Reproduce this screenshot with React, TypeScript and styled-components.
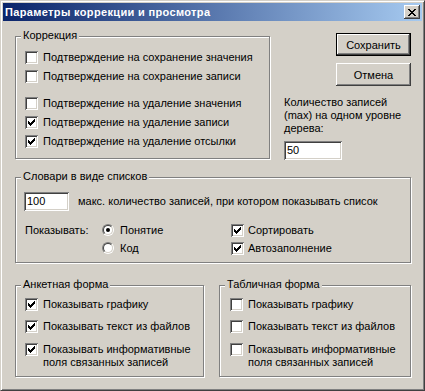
import * as React from 'react';
import styled, { createGlobalStyle } from 'styled-components';

const GlobalStyle = createGlobalStyle`
    html, body {
        margin: 0;
        padding: 0;
        background: #d4d0c8;
    }
    body {
        font-family: "Liberation Sans", Arial, sans-serif;
        font-size: 11px;
        color: #000;
    }
`;

const Window = styled.div`
    box-sizing: border-box;
    width: 425px;
    height: 391px;
    padding: 2px;
    background: #d4d0c8;
    border: 1px solid;
    border-color: #d4d0c8 #404040 #404040 #d4d0c8;
    box-shadow: inset 1px 1px 0 #fff, inset -1px -1px 0 #808080;
    display: flex;
    flex-direction: column;
`;

const TitleBar = styled.div`
    height: 18px;
    flex: none;
    display: flex;
    align-items: center;
    padding: 0 2px;
    background: linear-gradient(to right, #0a246a, #a6caf0);
    color: #fff;
    font-weight: bold;
`;

const TitleText = styled.div`
    flex: 1;
    line-height: 14px;
    letter-spacing: 0.35px;
    white-space: nowrap;
`;

const CloseButton = styled.div`
    box-sizing: border-box;
    width: 16px;
    height: 14px;
    display: flex;
    align-items: center;
    justify-content: center;
    background: #d4d0c8;
    box-shadow: inset -1px -1px 0 #404040, inset 1px 1px 0 #fff, inset -2px -2px 0 #808080;
`;

const Client = styled.div`
    flex: 1;
    display: flex;
    flex-direction: column;
    padding-left: 12px;
`;

const TopRow = styled.div`
    display: flex;
    align-items: flex-start;
`;

const Frame = styled.div<{ $w: number; $h: number; $mt?: number }>`
    position: relative;
    box-sizing: border-box;
    width: ${(p) => p.$w}px;
    height: ${(p) => p.$h}px;
    margin-top: ${(p) => p.$mt || 0}px;
    border: 1px solid #808080;
    box-shadow: inset 1px 1px 0 #fff, 1px 1px 0 #fff;
`;

const Legend = styled.span`
    position: absolute;
    top: -8px;
    left: 5px;
    padding: 0 2px;
    line-height: 13px;
    background: #d4d0c8;
    white-space: nowrap;
`;

const FrameBody = styled.div<{ $pt: number; $pl: number; $gap?: number }>`
    display: flex;
    flex-direction: column;
    gap: ${(p) => p.$gap || 0}px;
    padding: ${(p) => p.$pt}px 0 0 ${(p) => p.$pl}px;
`;

const CheckRow = styled.div<{ $mt?: number }>`
    display: flex;
    align-items: flex-start;
    gap: 5px;
    margin-top: ${(p) => p.$mt || 0}px;
`;

const Label = styled.span`
    line-height: 13px;
    white-space: nowrap;
`;

const Sunken = styled.div`
    box-sizing: border-box;
    background: #fff;
    box-shadow: inset 1px 1px 0 #808080, inset -1px -1px 0 #fff, inset 2px 2px 0 #404040, inset -2px -2px 0 #d4d0c8;
`;

const CheckBoxBox = styled(Sunken)`
    flex: none;
    width: 13px;
    height: 13px;
    display: flex;
    padding: 3px;
`;

const RightColumn = styled.div`
    width: 127px;
    margin-left: 14px;
    display: flex;
    flex-direction: column;
    padding-top: 12px;
`;

const Button = styled.div<{ $default?: boolean; $mt?: number }>`
    box-sizing: border-box;
    align-self: flex-end;
    width: 75px;
    height: 23px;
    margin-top: ${(p) => p.$mt || 0}px;
    display: flex;
    align-items: center;
    justify-content: center;
    border: ${(p) => (p.$default ? '1px solid #000' : 'none')};
    box-shadow: inset -1px -1px 0 #404040, inset 1px 1px 0 #fff, inset -2px -2px 0 #808080;
`;

const InfoLabel = styled.div`
    margin-top: 10px;
    line-height: 13px;
    white-space: nowrap;
`;

const TextBox = styled(Sunken)<{ $w: number }>`
    width: ${(p) => p.$w}px;
    height: 19px;
    padding: 0 3px;
    line-height: 19px;
    flex: none;
`;

const CountBox = styled(TextBox)`
    margin-top: 6px;
`;

const LimitRow = styled.div`
    display: flex;
    align-items: center;
    gap: 9px;
`;

const ShowGrid = styled.div`
    display: grid;
    grid-template-columns: 78px 129px auto;
    grid-auto-rows: 18px;
    align-items: center;
    margin-top: 10px;
`;

const ShowLabel = styled.span`
    padding-left: 1px;
`;

const OptionRow = styled.div<{ $col: number }>`
    grid-column: ${(p) => p.$col};
    display: flex;
    align-items: center;
    gap: ${(p) => (p.$col === 2 ? 6 : 4)}px;
    line-height: 13px;
    white-space: nowrap;
`;

const RadioOuter = styled.span`
    box-sizing: border-box;
    flex: none;
    width: 12px;
    height: 12px;
    display: flex;
    border-radius: 50%;
    border: 1px solid;
    border-color: #808080 #fff #fff #808080;
`;

const RadioInner = styled.span`
    box-sizing: border-box;
    flex: 1;
    display: flex;
    align-items: center;
    justify-content: center;
    border-radius: 50%;
    border: 1px solid;
    border-color: #404040 #d4d0c8 #d4d0c8 #404040;
    background: #fff;
`;

const RadioDot = styled.span`
    width: 4px;
    height: 4px;
    border-radius: 50%;
    background: #000;
`;

const BottomRow = styled.div`
    display: flex;
    gap: 15px;
    margin-top: 22px;
`;

const CheckMark = () => (
    <svg width="7" height="7" viewBox="0 0 7 7" shapeRendering="crispEdges">
        <path
            fill="#000"
            d="M6 0h1v1h-1z M5 1h2v1h-2z M0 2h1v1h-1z M4 2h3v1h-3z M0 3h2v1h-2z M3 3h3v1h-3z M0 4h5v1h-5z M1 5h3v1h-3z M2 6h1v1h-1z"
        />
    </svg>
);

const CloseGlyph = () => (
    <svg width="8" height="7" viewBox="0 0 8 7" shapeRendering="crispEdges">
        <path
            fill="#000"
            d="M0 0h2v1h-2z M6 0h2v1h-2z M1 1h2v1h-2z M5 1h2v1h-2z M2 2h4v1h-4z M3 3h2v1h-2z M2 4h4v1h-4z M1 5h2v1h-2z M5 5h2v1h-2z M0 6h2v1h-2z M6 6h2v1h-2z"
        />
    </svg>
);

const CheckBox = ({ checked }: { checked?: boolean }) => (
    <CheckBoxBox>{checked && <CheckMark />}</CheckBoxBox>
);

const Radio = ({ checked }: { checked?: boolean }) => (
    <RadioOuter>
        <RadioInner>{checked && <RadioDot />}</RadioInner>
    </RadioOuter>
);

interface CheckItemProps {
    checked?: boolean;
    mt?: number;
    children: React.ReactNode;
}

const CheckItem = ({ checked, mt, children }: CheckItemProps) => (
    <CheckRow $mt={mt}>
        <CheckBox checked={checked} />
        <Label>{children}</Label>
    </CheckRow>
);

const correction = [
    { text: 'Подтверждение на сохранение значения', checked: false },
    { text: 'Подтверждение на сохранение записи', checked: false },
    { text: 'Подтверждение на удаление значения', checked: false, mt: 8 },
    { text: 'Подтверждение на удаление записи', checked: true },
    { text: 'Подтверждение на удаление отсылки', checked: true },
];

const FormGroup = ({ title, width, pl, checked }: { title: string; width: number; pl: number; checked: boolean }) => (
    <Frame $w={width} $h={92}>
        <Legend>{title}</Legend>
        <FrameBody $pt={12} $pl={pl} $gap={9}>
            <CheckItem checked={checked}>Показывать графику</CheckItem>
            <CheckItem checked={checked}>Показывать текст из файлов</CheckItem>
            <CheckItem checked={checked} mt={1}>
                Показывать информативные
                <br />
                поля связанных записей
            </CheckItem>
        </FrameBody>
    </Frame>
);

export default function App() {
    return (
        <>
            <GlobalStyle />
            <Window>
                <TitleBar>
                    <TitleText>Параметры коррекции и просмотра</TitleText>
                    <CloseButton>
                        <CloseGlyph />
                    </CloseButton>
                </TitleBar>
                <Client>
                    <TopRow>
                        <Frame $w={255} $h={123} $mt={15}>
                            <Legend>Коррекция</Legend>
                            <FrameBody $pt={14} $pl={9} $gap={6}>
                                {correction.map((item) => (
                                    <CheckItem key={item.text} checked={item.checked} mt={item.mt}>
                                        {item.text}
                                    </CheckItem>
                                ))}
                            </FrameBody>
                        </Frame>
                        <RightColumn>
                            <Button $default>Сохранить</Button>
                            <Button $mt={7}>Отмена</Button>
                            <InfoLabel>
                                Количество записей
                                <br />
                                (max) на одном уровне
                                <br />
                                дерева:
                            </InfoLabel>
                            <CountBox $w={58}>50</CountBox>
                        </RightColumn>
                    </TopRow>

                    <Frame $w={396} $h={86} $mt={17}>
                        <Legend>Словари в виде списков</Legend>
                        <FrameBody $pt={14} $pl={8}>
                            <LimitRow>
                                <TextBox $w={45}>100</TextBox>
                                <Label>макс. количество записей, при котором показывать список</Label>
                            </LimitRow>
                            <ShowGrid>
                                <ShowLabel>Показывать:</ShowLabel>
                                <OptionRow $col={2}>
                                    <Radio checked />
                                    Понятие
                                </OptionRow>
                                <OptionRow $col={3}>
                                    <CheckBox checked />
                                    Сортировать
                                </OptionRow>
                                <OptionRow $col={2}>
                                    <Radio />
                                    Код
                                </OptionRow>
                                <OptionRow $col={3}>
                                    <CheckBox checked />
                                    Автозаполнение
                                </OptionRow>
                            </ShowGrid>
                        </FrameBody>
                    </Frame>

                    <BottomRow>
                        <FormGroup title="Анкетная форма" width={189} pl={9} checked />
                        <FormGroup title="Табличная форма" width={192} pl={10} checked={false} />
                    </BottomRow>
                </Client>
            </Window>
        </>
    );
}
